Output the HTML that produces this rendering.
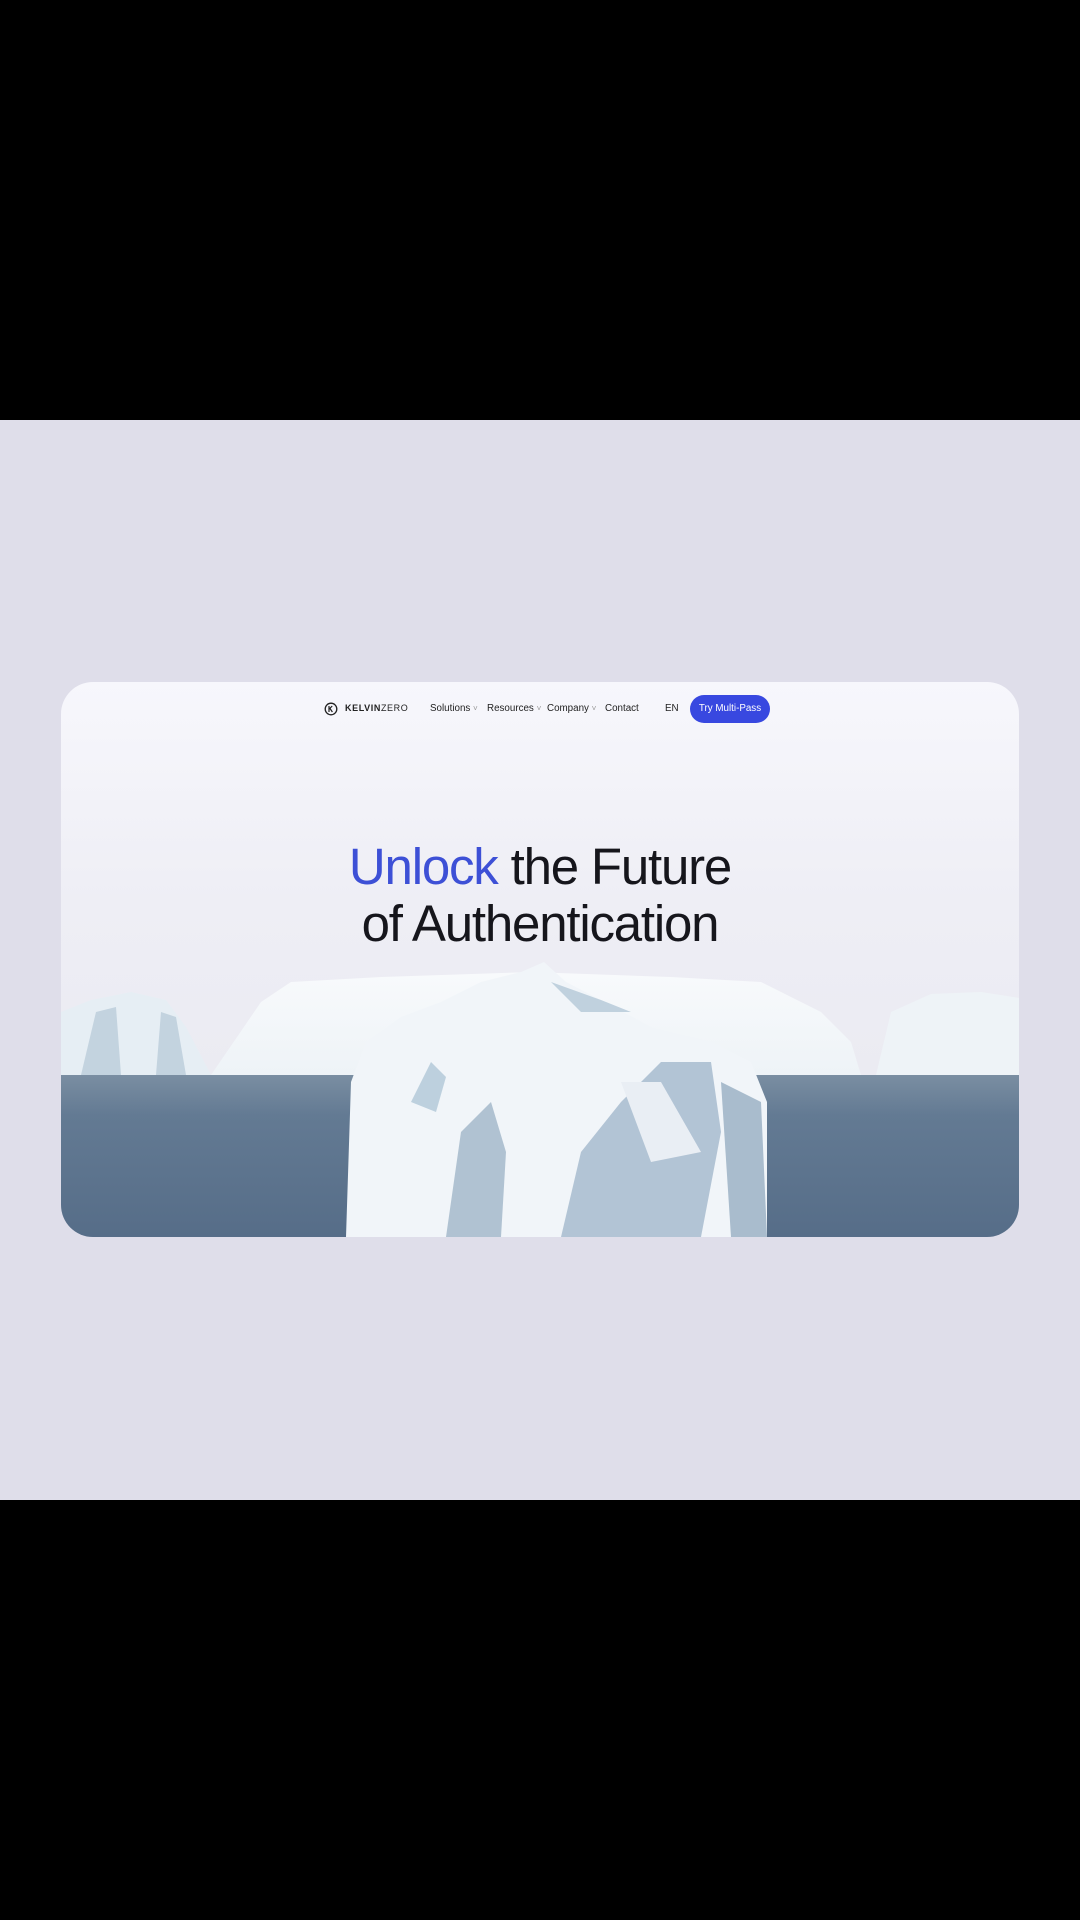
<!DOCTYPE html>
<html><head><meta charset="utf-8"><style>
html,body{margin:0;padding:0;width:1080px;height:1920px;background:#000;overflow:hidden}
.lav{position:absolute;left:0;top:420px;width:1080px;height:1080px;background:#dfdeea}
.card{position:absolute;left:61px;top:682px;width:958px;height:555px;border-radius:32px;overflow:hidden;background:linear-gradient(#f7f7fc 0%,#eeeef5 40%,#e8e8ef 100%)}
.nav{position:absolute;left:0;top:0;width:958px;height:60px;font-family:"Liberation Sans",sans-serif;font-size:9.8px;color:#222}
.nav span{position:absolute;top:21px}
.btn{position:absolute;left:629px;top:13px;width:80px;height:28px;border-radius:14px;background:#3848e0;color:#fff;font-size:9.8px;line-height:28px;text-align:center}
h1{position:absolute;left:0;width:958px;top:156px;margin:0;text-align:center;font-family:"Liberation Sans",sans-serif;font-weight:400;font-size:51px;line-height:57px;letter-spacing:-1.2px;color:#16161c}
h1 b{font-weight:400;color:#3d50d6}
svg{position:absolute;left:0;top:0}
</style></head><body>
<div class="lav"></div>
<div class="card">
<svg width="958" height="555" viewBox="0 0 958 555">
<defs>
<linearGradient id="sea" x1="0" y1="0" x2="0" y2="1"><stop offset="0" stop-color="#7a8ea2"/><stop offset="0.25" stop-color="#637a93"/><stop offset="1" stop-color="#566d88"/></linearGradient>
<linearGradient id="ice" x1="0" y1="0" x2="0" y2="1"><stop offset="0" stop-color="#f8fafc"/><stop offset="1" stop-color="#eef3f7"/></linearGradient>
</defs>
<rect x="0" y="393" width="958" height="162" fill="url(#sea)"/>
<path d="M150 393 L200 320 L230 300 L320 295 L470 290 L610 295 L700 300 L760 330 L790 360 L800 393 Z" fill="url(#ice)"/>
<path d="M0 393 L0 330 L30 318 L70 310 L105 318 L125 345 L150 393 Z" fill="#e6eef4"/>
<path d="M20 393 L35 330 L55 325 L60 393 Z" fill="#c3d3df"/>
<path d="M95 393 L100 330 L115 335 L125 393 Z" fill="#c3d3df"/>
<path d="M815 393 L830 330 L870 312 L920 310 L958 316 L958 393 Z" fill="#eef3f7"/>
<path d="M285 555 L290 400 L305 360 L340 335 L380 320 L420 300 L460 290 L483 280 L505 300 L540 318 L590 345 L650 360 L690 380 L706 420 L706 555 Z" fill="#f1f5f9"/>
<path d="M385 555 L400 450 L430 420 L445 470 L440 555 Z" fill="#b0c2d2"/>
<path d="M500 555 L520 470 L560 420 L600 380 L650 380 L660 450 L640 555 Z" fill="#b2c4d5"/>
<path d="M350 420 L370 380 L385 395 L375 430 Z" fill="#bdd0de"/>
<path d="M490 300 L520 330 L570 330 L540 318 Z" fill="#c0d1de"/>
<path d="M560 400 L600 400 L640 470 L590 480 Z" fill="#e9eef4"/>
<path d="M660 400 L700 420 L706 555 L670 555 Z" fill="#a9bccd"/>
</svg>
<div class="nav">
<svg width="14" height="14" viewBox="0 0 14 14" style="left:263px;top:20px"><circle cx="7" cy="7" r="5.8" fill="none" stroke="#222" stroke-width="1.3"/><path d="M5 4 V10 M5 7.3 L8.2 4 M6 6.5 L8.4 10" stroke="#222" stroke-width="1.2" fill="none"/></svg>
<span style="left:284px;font-weight:700;letter-spacing:0.6px;font-size:9px">KELVIN<span style="position:static;font-weight:400">ZERO</span></span>
<span style="left:369px">Solutions <small style="color:#999">˅</small></span>
<span style="left:426px">Resources <small style="color:#999">˅</small></span>
<span style="left:486px">Company <small style="color:#999">˅</small></span>
<span style="left:544px">Contact</span>
<span style="left:604px">EN</span>
<div class="btn">Try Multi-Pass</div>
</div>
<h1><b>Unlock</b> the Future<br>of Authentication</h1>
</div>
</body></html>
